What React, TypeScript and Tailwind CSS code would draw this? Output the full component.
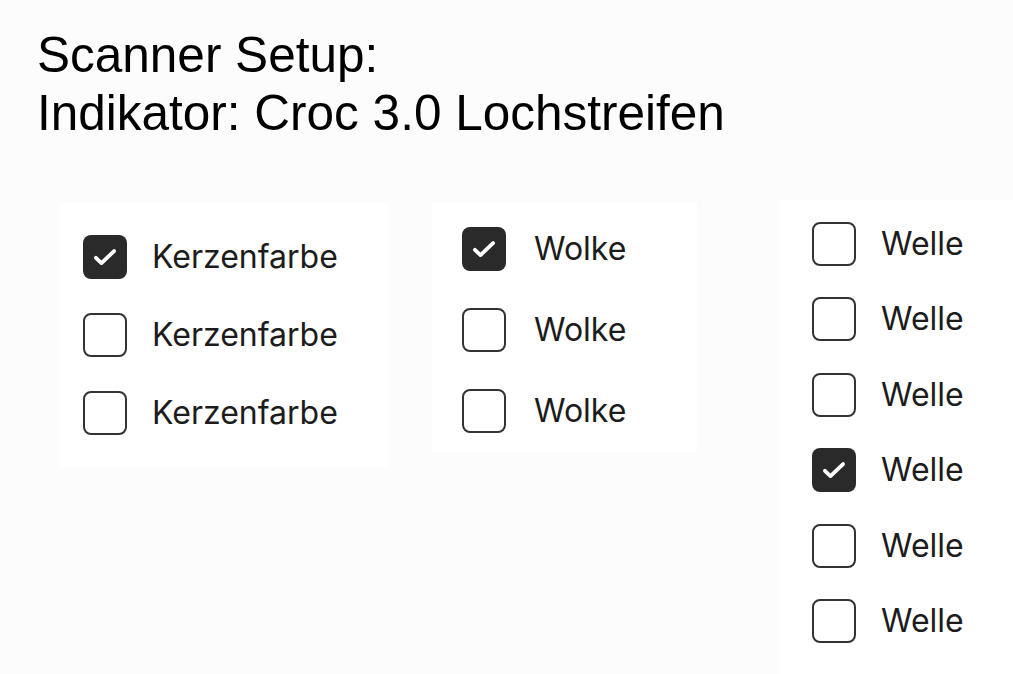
import React from "react";

type Item = { label: string; checked: boolean };

const Checkbox: React.FC<{ checked: boolean }> = ({ checked }) =>
  checked ? (
    <div className="w-[44px] h-[44px] rounded-[8px] bg-[#2a2a2a] flex items-center justify-center flex-shrink-0">
      <svg width="34" height="34" viewBox="0 0 24 24" fill="none">
        <path d="M5.6 12.6l3.9 3.7L18.4 7.8" stroke="#fff" strokeWidth="2.7" strokeLinecap="round" strokeLinejoin="round" />
      </svg>
    </div>
  ) : (
    <div className="w-[44px] h-[44px] rounded-[8px] border-[2.5px] border-[#333] bg-white flex-shrink-0" />
  );

const Panel: React.FC<{ items: Item[]; className: string; gap: string; labelGap: string }> = ({
  items,
  className,
  gap,
  labelGap,
}) => (
  <div className={`bg-white flex flex-col ${gap} ${className}`}>
    {items.map((it, i) => (
      <label key={i} className={`flex items-center ${labelGap}`}>
        <Checkbox checked={it.checked} />
        <span className="text-[32px] text-[#1c1c1c] leading-none" style={{ fontFamily: "Inter, 'Noto Sans', sans-serif" }}>
          {it.label}
        </span>
      </label>
    ))}
  </div>
);

export default function App() {
  const kerzen: Item[] = [
    { label: "Kerzenfarbe", checked: true },
    { label: "Kerzenfarbe", checked: false },
    { label: "Kerzenfarbe", checked: false },
  ];
  const wolke: Item[] = [
    { label: "Wolke", checked: true },
    { label: "Wolke", checked: false },
    { label: "Wolke", checked: false },
  ];
  const welle: Item[] = [
    { label: "Welle", checked: false },
    { label: "Welle", checked: false },
    { label: "Welle", checked: false },
    { label: "Welle", checked: true },
    { label: "Welle", checked: false },
    { label: "Welle", checked: false },
  ];

  return (
    <div className="w-[1013px] h-[674px] overflow-hidden bg-[#fcfcfc] relative">
      {/* Header */}
      <div
        className="pt-[26px] pl-[37px] text-[49.5px] leading-[58px] text-black"
        style={{ fontFamily: "'Liberation Sans', Arial, sans-serif" }}
      >
        <div>Scanner Setup:</div>
        <div>Indikator: Croc 3.0 Lochstreifen</div>
      </div>

      {/* Checkbox groups */}
      <div className="flex items-start mt-[58px] pl-[60px]">
        <Panel
          items={kerzen}
          className="w-[328px] mt-[3px] pt-[32px] pb-[32px] pl-[23px]"
          gap="gap-[34px]"
          labelGap="gap-[25px]"
        />
        <Panel
          items={wolke}
          className="w-[265px] ml-[44px] mt-[3px] pt-[24px] pb-[19px] pl-[30px]"
          gap="gap-[37px]"
          labelGap="gap-[28px]"
        />
        <Panel
          items={welle}
          className="w-[233px] h-[474px] ml-[83px] pt-[22px] pl-[32px]"
          gap="gap-[31.4px]"
          labelGap="gap-[25px]"
        />
      </div>
    </div>
  );
}
